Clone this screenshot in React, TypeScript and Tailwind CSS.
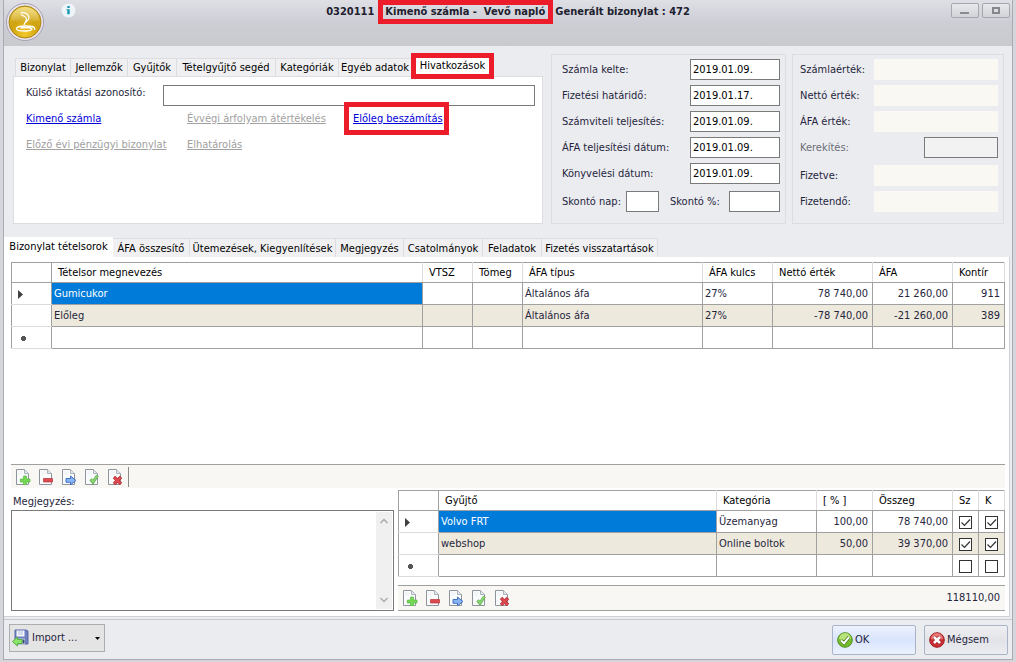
import { useState } from 'react'
import type { ReactNode } from 'react'
import clsx from 'clsx'

const TOP_TABS = [
  { name: 'Bizonylat', width: 'w-[55px]' },
  { name: 'Jellemzők', width: 'w-[57px]' },
  { name: 'Gyűjtők', width: 'w-[49px]' },
  { name: 'Tételgyűjtő segéd', width: 'w-[99px]' },
  { name: 'Kategóriák', width: 'w-[63px]' },
  { name: 'Egyéb adatok', width: 'w-[73px]' },
  { name: 'Hivatkozások', width: 'w-[83px]' },
]

const LINE_TABS = [
  { name: 'Bizonylat tételsorok', width: 'w-[109px]' },
  { name: 'ÁFA összesítő', width: 'w-[77px]' },
  { name: 'Ütemezések, Kiegyenlítések', width: 'w-[146px]' },
  { name: 'Megjegyzés', width: 'w-[68px]' },
  { name: 'Csatolmányok', width: 'w-[79px]' },
  { name: 'Feladatok', width: 'w-[59px]' },
  { name: 'Fizetés visszatartások', width: 'w-[116px]' },
]

const DATES = [
  { id: 'kelte', label: 'Számla kelte:', value: '2019.01.09.' },
  { id: 'hatarido', label: 'Fizetési határidő:', value: '2019.01.17.' },
  { id: 'szamviteli', label: 'Számviteli teljesítés:', value: '2019.01.09.' },
  { id: 'afadatum', label: 'ÁFA teljesítési dátum:', value: '2019.01.09.' },
  { id: 'konyveles', label: 'Könyvelési dátum:', value: '2019.01.09.' },
]

const LINES = [
  { name: 'Gumicukor', type: 'Általános áfa', rate: '27%', net: '78 740,00', vat: '21 260,00', ledger: '911' },
  { name: 'Előleg', type: 'Általános áfa', rate: '27%', net: '-78 740,00', vat: '-21 260,00', ledger: '389' },
]

const COLLECTORS = [
  { name: 'Volvo FRT', category: 'Üzemanyag', percent: '100,00', amount: '78 740,00' },
  { name: 'webshop', category: 'Online boltok', percent: '50,00', amount: '39 370,00' },
]

const INPUT = 'h-[21px] border border-[#7a7a7a] bg-white px-[2px] pb-px text-black outline-none'
const CELL = 'border border-[#a0a0a0] px-[2px] pt-px'
const HEAD = 'border-x border-y border-x-[#dcdcdc] border-y-[#a0a0a0] px-[6px] text-left font-normal text-black'
const ROW_HEAD = 'border-x border-y border-x-[#a0a0a0] border-y-[#dcdcdc] bg-white pl-[6px] pt-px'

function Highlight({ className }: { className: string }) {
  return <span className={clsx('pointer-events-none absolute z-10 border-[5px] border-[#ec1c2b]', className)} />
}

function PageIcon({ children }: { children: ReactNode }) {
  return (
    <svg className="h-4 w-4" viewBox="0 0 16 16" fill="none">
      <path d="M1.500 .5h8l4 4v11h-12z" fill="#fafbfc" stroke="#8d949c" />
      <path d="M9.500 .5v4h4" fill="#e4e8ec" stroke="#aab2ba" />
      <path d="M3 3h5M3 5h4" stroke="#edf0f2" />
      {children}
    </svg>
  )
}

function RecordToolbar() {
  const button = 'flex h-5 w-4 items-center justify-center'
  return (
    <div className="flex gap-[7px]">
      <button className={button} aria-label="Új sor">
        <PageIcon><path d="M8.500 7h3v3h3.500v3h-3.500v3h-3v-3h-3.200v-3h3.200z" fill="#74d953" stroke="#4fae39" strokeWidth=".6" /></PageIcon>
      </button>
      <button className={button} aria-label="Sor törlése">
        <PageIcon><path d="M5.500 9.500h9v3.500h-9z" fill="#dc4b50" stroke="#b8343b" strokeWidth=".7" /></PageIcon>
      </button>
      <button className={button} aria-label="Sor szerkesztése">
        <PageIcon><path d="M5 9.500h4.500v-2.500l5.500 4.500-5.500 4.300v-2.500h-4.500z" fill="#88b4f2" stroke="#3467bd" strokeWidth=".9" /></PageIcon>
      </button>
      <button className={button} aria-label="Sor mentése">
        <PageIcon><path d="M6.500 10.200l2.500 3 4.500-6.700" stroke="#5cab4b" strokeWidth="3" /><path d="M6.700 10.400l2.300 2.500 4.300-6.100" stroke="#8fd877" strokeWidth="1.600" /></PageIcon>
      </button>
      <button className={button} aria-label="Visszavonás">
        <PageIcon><path d="M7 8l7 7M14 8l-7 7" stroke="#b92f38" strokeWidth="3.400" /><path d="M7.500 8.500l6 6M13.500 8.500l-6 6" stroke="#dd4a50" strokeWidth="2" /></PageIcon>
      </button>
    </div>
  )
}

function CurrentMark() {
  return <svg className="h-[9px] w-[5px]" viewBox="0 0 5 9"><path d="M0 0l5 4.500-5 4.500z" fill="#404040" /></svg>
}

function NewMark() {
  return (
    <svg className="ml-[3px] h-[5px] w-[5px]" viewBox="0 0 5 5">
      <path d="M1 0h3v1h1v3h-1v1h-3v-1h-1v-3h1z" fill="#555" />
    </svg>
  )
}

function Check({ label, checked }: { label: string; checked: boolean }) {
  const [on, setOn] = useState(checked)
  return (
    <span className="relative mx-auto block h-[13px] w-[13px]">
      <input type="checkbox" aria-label={label} checked={on} onChange={() => setOn(!on)} className="block h-full w-full appearance-none border border-[#333] bg-white" />
      {on && (
        <svg className="pointer-events-none absolute inset-0" viewBox="0 0 13 13" fill="none">
          <path d="M2.500 6.500l3 3 5.500-6" stroke="#333" strokeWidth="1.200" />
        </svg>
      )}
    </span>
  )
}

function Logo() {
  return (
    <svg className="h-10 w-10" viewBox="0 0 40 40" fill="none">
      <defs>
        <radialGradient id="gold" cx=".5" cy=".85" r=".85">
          <stop offset="0" stopColor="#f4c92e" />
          <stop offset=".5" stopColor="#cfa20f" />
          <stop offset="1" stopColor="#dcb52c" />
        </radialGradient>
        <linearGradient id="gloss" x1="0" y1="0" x2="0" y2="1">
          <stop offset="0" stopColor="#fff0a0" stopOpacity=".7" />
          <stop offset="1" stopColor="#fff" stopOpacity=".02" />
        </linearGradient>
      </defs>
      <circle cx="20" cy="20" r="18.500" fill="#e9e4ee" stroke="#a69eb3" />
      <circle cx="20" cy="20" r="16" fill="url(#gold)" stroke="#a88612" />
      <path d="M6 18a14 13 0 0 1 28 0c-8 4-20 4-28 0z" fill="url(#gloss)" />
      <path d="M15.500 11c4-1.500 8.500 1 8.500 5 0 3-4.500 3.500-5 7M16 12.500l3.500 2c3 1 2 4 .5 6" stroke="#fff" strokeWidth="1.200" />
      <path d="M29.500 28c1.500-4-5-4-9-4-5 0-9 1-9 2.700 0 2.300 6 2.300 9 2.300s8-1 6-2.700c-2-1-8-1-11-.3" stroke="#fff" strokeWidth="1.300" />
    </svg>
  )
}

function TitleBar() {
  const control = 'flex h-[15px] w-7 items-center justify-center rounded-[2px] border border-[#a5a6ae] bg-gradient-to-b from-[#e8e8ec] to-[#d2d3d8]'
  return (
    <header className="relative flex h-[46px] items-start justify-between bg-gradient-to-b from-[#dfe0e6] via-[#cdced5] to-[#c9cacd]">
      <div className="flex w-20 items-start gap-4 pl-px pt-[2px]">
        <Logo />
        <svg className="mt-px h-[15px] w-[15px]" viewBox="0 0 15 15">
          <circle cx="7.500" cy="7.500" r="7" fill="#edf5f9" />
          <path d="M6.300 3h2.400v2h-2.400zM5.500 6.300h3.200v5h-2.400v-4h-.8z" fill="#1896b8" />
        </svg>
      </div>
      <h1 className="flex whitespace-pre pt-[5px] font-bold leading-[14px] text-[#20202e]">
        <span>0320111 - </span>
        <span className="relative">
          Kimenő számla -  Vevő napló
          <Highlight className="-bottom-[5px] -left-[7px] -right-2 -top-[5px]" />
        </span>
        <span className="pl-[10px]">Generált bizonylat : 472</span>
      </h1>
      <div className="flex w-20 justify-end gap-[3px] pr-[2px] pt-[3px]">
        <button className={control} aria-label="Kis méret">
          <svg className="h-2 w-[10px]" viewBox="0 0 10 8"><path d="M0 5h9v2h-9z" fill="#898b92" /></svg>
        </button>
        <button className={control} aria-label="Teljes méret">
          <svg className="h-[7px] w-2" viewBox="0 0 8 7" fill="none"><path d="M1 1h6v5h-6z" stroke="#85878e" strokeWidth="2" /></svg>
        </button>
      </div>
    </header>
  )
}

function ReferencePanel() {
  const [tab, setTab] = useState(6)
  const disabled = 'justify-self-start text-[#a0a0a0] underline'
  return (
    <section className="ml-[9px] flex min-w-0 flex-1 flex-col">
      <div role="tablist" className="ml-[2px] mt-1 flex h-[18px] items-stretch">
        {TOP_TABS.map((t, i) => (
          <button
            key={t.name}
            role="tab"
            aria-selected={tab === i}
            onClick={() => setTab(i)}
            className={clsx(
              'relative shrink-0 whitespace-nowrap text-black',
              t.width,
              tab === i ? 'z-10 -mt-[2px] bg-white' : 'border-l border-t border-[#dcdde1] bg-[#f0f0f2] pt-px',
            )}
          >
            {t.name}
            {i === 6 && <Highlight className="-bottom-[3px] -top-[3px] left-0 right-0" />}
          </button>
        ))}
      </div>
      <div className="flex-1 border border-[#dcdde1] bg-white px-[7px] pt-2">
        <div className="flex h-[21px] items-center pl-[5px]">
          <label htmlFor="iktato" className="w-[137px] pb-[6px]">Külső iktatási azonosító:</label>
          <input id="iktato" className={clsx(INPUT, 'min-w-0 flex-1')} />
        </div>
        <div className="grid grid-cols-[161px_166px_1fr] gap-y-3 pl-[5px] pt-[6px] leading-[14px]">
          <a href="#kimeno" className="justify-self-start text-[#0000d8] underline">Kimenő számla</a>
          <a aria-disabled="true" className={disabled}>Évvégi árfolyam átértékelés</a>
          <a href="#eloleg" className="relative justify-self-start text-[#0000d8] underline">
            Előleg beszámítás
            <Highlight className="-bottom-[9px] -left-[9px] -right-[6px] -top-[10px]" />
          </a>
          <a aria-disabled="true" className={disabled}>Előző évi pénzügyi bizonylat</a>
          <a aria-disabled="true" className={disabled}>Elhatárolás</a>
        </div>
      </div>
    </section>
  )
}

function DatePanel() {
  return (
    <section className="flex w-[235px] flex-col gap-[5px] border border-[#dcdde1] pl-[10px] pr-[5px] pt-1">
      {DATES.map((d) => (
        <div key={d.id} className="flex h-[21px] items-center justify-between">
          <label htmlFor={d.id} className="pt-px">{d.label}</label>
          <input id={d.id} defaultValue={d.value} className={clsx(INPUT, 'w-[90px]')} />
        </div>
      ))}
      <div className="mt-[2px] flex h-[21px] items-center">
        <label htmlFor="skontonap" className="w-16 pt-px">Skontó nap:</label>
        <input id="skontonap" className={clsx(INPUT, 'w-[33px]')} />
        <label htmlFor="skonto" className="ml-[11px] pt-px">Skontó %:</label>
        <input id="skonto" className={clsx(INPUT, 'ml-auto w-[51px]')} />
      </div>
    </section>
  )
}

function AmountPanel() {
  const row = 'flex h-[21px] items-center justify-between'
  const output = 'h-[21px] w-[124px] bg-[#f9f8f3]'
  return (
    <section className="flex w-[212px] flex-col gap-[5px] border border-[#dcdde1] pl-[7px] pr-[5px] pt-1">
      {['Számlaérték:', 'Nettó érték:', 'ÁFA érték:'].map((label) => (
        <div key={label} className={row}>
          <span className="pt-px">{label}</span>
          <output className={output} />
        </div>
      ))}
      <div className={clsx(row, 'mb-[2px]')}>
        <label htmlFor="kerekites" className="pt-px text-[#6b6c78]">Kerekítés:</label>
        <input id="kerekites" disabled className="h-[21px] w-[74px] border border-[#7a7a7a] bg-[#f2f2f2]" />
      </div>
      {['Fizetve:', 'Fizetendő:'].map((label) => (
        <div key={label} className={row}>
          <span className="pt-px">{label}</span>
          <output className={output} />
        </div>
      ))}
    </section>
  )
}

function LineTable() {
  return (
    <table className="w-full table-fixed border-collapse">
      <colgroup>
        <col className="w-10" />
        <col />
        <col className="w-[50px]" />
        <col className="w-[50px]" />
        <col className="w-[180px]" />
        <col className="w-[70px]" />
        <col className="w-[100px]" />
        <col className="w-[80px]" />
        <col className="w-[52px]" />
      </colgroup>
      <thead>
        <tr className="h-5">
          <th className="border border-[#a0a0a0]" />
          {['Tételsor megnevezés', 'VTSZ', 'Tömeg', 'ÁFA típus', 'ÁFA kulcs', 'Nettó érték', 'ÁFA', 'Kontír'].map((h) => (
            <th key={h} className={HEAD}>{h}</th>
          ))}
        </tr>
      </thead>
      <tbody>
        {LINES.map((line, i) => (
          <tr key={line.name} className={clsx('h-[22px]', i === 1 && 'bg-[#eee9dd]')}>
            <td className={ROW_HEAD}>{i === 0 && <CurrentMark />}</td>
            <td className={clsx(CELL, i === 0 && 'bg-[#007bda] text-white')}>{line.name}</td>
            <td className={CELL} />
            <td className={CELL} />
            <td className={CELL}>{line.type}</td>
            <td className={CELL}>{line.rate}</td>
            <td className={clsx(CELL, 'pr-1 text-right')}>{line.net}</td>
            <td className={clsx(CELL, 'pr-1 text-right')}>{line.vat}</td>
            <td className={clsx(CELL, 'pr-1 text-right')}>{line.ledger}</td>
          </tr>
        ))}
        <tr className="h-[22px]">
          <td className={ROW_HEAD}><NewMark /></td>
          {Array.from({ length: 8 }, (_, i) => <td key={i} className={CELL} />)}
        </tr>
      </tbody>
    </table>
  )
}

function CollectorTable() {
  return (
    <table className="w-full table-fixed border-collapse">
      <colgroup>
        <col className="w-10" />
        <col />
        <col className="w-[100px]" />
        <col className="w-[56px]" />
        <col className="w-[80px]" />
        <col className="w-[26px]" />
        <col className="w-[26px]" />
      </colgroup>
      <thead>
        <tr className="h-5">
          <th className="border border-[#a0a0a0]" />
          {['Gyűjtő', 'Kategória', '[ % ]', 'Összeg', 'Sz', 'K'].map((h) => (
            <th key={h} className={HEAD}>{h}</th>
          ))}
        </tr>
      </thead>
      <tbody>
        {COLLECTORS.map((c, i) => (
          <tr key={c.name} className={clsx('h-[22px]', i === 1 && 'bg-[#eee9dd]')}>
            <td className={ROW_HEAD}>{i === 0 && <CurrentMark />}</td>
            <td className={clsx(CELL, i === 0 && 'bg-[#007bda] text-white')}>{c.name}</td>
            <td className={CELL}>{c.category}</td>
            <td className={clsx(CELL, 'pr-1 text-right')}>{c.percent}</td>
            <td className={clsx(CELL, 'pr-1 text-right')}>{c.amount}</td>
            <td className={CELL}><Check label="Sz" checked /></td>
            <td className={CELL}><Check label="K" checked /></td>
          </tr>
        ))}
        <tr className="h-[22px]">
          <td className={ROW_HEAD}><NewMark /></td>
          {Array.from({ length: 4 }, (_, i) => <td key={i} className={CELL} />)}
          <td className={CELL}><Check label="Sz" checked={false} /></td>
          <td className={CELL}><Check label="K" checked={false} /></td>
        </tr>
      </tbody>
    </table>
  )
}

function NoteBox() {
  return (
    <div className="flex w-[383px] flex-col">
      <label htmlFor="megjegyzes" className="flex h-[22px] items-center pl-[2px] pt-[6px]">Megjegyzés:</label>
      <div className="flex flex-1 border border-[#7a7a7a]">
        <textarea id="megjegyzes" className="min-w-0 flex-1 resize-none p-1 outline-none" />
        <div className="mb-px mr-px mt-px flex w-4 flex-col items-center justify-between bg-[#f0f0f0] py-[6px]">
          <svg className="h-[6px] w-2" viewBox="0 0 8 6" fill="none"><path d="M.5 5l3.500-3.500 3.500 3.500" stroke="#aaa" strokeWidth="1.500" /></svg>
          <svg className="h-[6px] w-2" viewBox="0 0 8 6" fill="none"><path d="M.5 1l3.500 3.500 3.500-3.500" stroke="#aaa" strokeWidth="1.500" /></svg>
        </div>
      </div>
    </div>
  )
}

function Footer() {
  const button = 'flex h-[30px] w-[84px] items-center rounded-[2px] border border-[#a9b4c9] pl-1'
  return (
    <footer className="flex h-10 items-start justify-between border-t border-[#c8c9ce] pl-[5px] pr-1 pt-1">
      <button className="flex h-[28px] w-24 items-center border border-[#adadb0] bg-[#e4e4e5] pl-[2px] pr-1">
        <svg className="h-[18px] w-[17px]" viewBox="0 0 17 18">
          <path d="M3 1h11l2 1v13h-13z" fill="#6d7fc0" stroke="#5b67a6" />
          <path d="M4.500 1.500h8v6h-8z" fill="#f4f7fc" />
          <path d="M5 9.500h8v6h-8z" fill="#cdd6e6" />
          <path d="M10.500 10.500h2v4h-2z" fill="#3c4679" />
          <path d="M6 3h5M6 5h5" stroke="#b4bfd8" />
          <path d="M.5 12.500l5-4.500v2.500h4.500v4h-4.500v2.500z" fill="#8be66b" stroke="#55b045" />
        </svg>
        <span className="flex-1 pl-[3px] text-left">Import ...</span>
        <svg className="h-[3px] w-[5px]" viewBox="0 0 5 3"><path d="M0 0h5l-2.500 3z" fill="#000" /></svg>
      </button>
      <div className="flex gap-2 pt-px">
        <button className={clsx(button, 'bg-gradient-to-b from-[#edf2fd] via-[#d8e3fd] to-[#ecf2fe]')}>
          <svg className="h-4 w-4" viewBox="0 0 16 16" fill="none">
            <circle cx="8" cy="8" r="7.300" fill="#78bd2e" stroke="#4c8f1c" />
            <path d="M2 7a6 6 0 0 1 12 0c-4 1.500-8 1.500-12 0z" fill="#b8e37c" />
            <path d="M4 8.500l3 2.700 5-6" stroke="#3f7a1a" strokeWidth="3.400" />
            <path d="M4 8.500l3 2.700 5-6" stroke="#fff" strokeWidth="2" />
          </svg>
          <span className="pl-[2px]">OK</span>
        </button>
        <button className={clsx(button, 'bg-gradient-to-b from-[#f0f0f3] via-[#e2e3e8] to-[#ecedf1]')}>
          <svg className="h-4 w-4" viewBox="0 0 16 16" fill="none">
            <circle cx="8" cy="8" r="7.300" fill="#c92d33" stroke="#9c1c22" />
            <path d="M2 7a6 6 0 0 1 12 0c-4 1.500-8 1.500-12 0z" fill="#e77a78" />
            <path d="M5 5l6 6M11 5l-6 6" stroke="#a31d24" strokeWidth="4" />
            <path d="M5 5l6 6M11 5l-6 6" stroke="#fff" strokeWidth="2.600" />
          </svg>
          <span className="pl-[2px]">Mégsem</span>
        </button>
      </div>
    </footer>
  )
}

export default function App() {
  const [lineTab, setLineTab] = useState(0)

  return (
    <div className="flex min-h-screen flex-col bg-[#d5d6db] px-[3px] pb-[2px] font-['DejaVu_Sans_Condensed','DejaVu_Sans',sans-serif] text-[11px] leading-[14px] text-[#25253c]">
      <div className="flex flex-1 flex-col border-x border-b border-[#a9aab2] bg-[#ebecf0]">
        <TitleBar />

        <div className="mr-2 mt-2 flex h-[170px] items-stretch">
          <ReferencePanel />
          <div className="ml-2 flex gap-[6px]">
            <DatePanel />
            <AmountPanel />
          </div>
        </div>

        <div role="tablist" className="mt-[14px] flex h-[19px] items-stretch">
          {LINE_TABS.map((t, i) => (
            <button
              key={t.name}
              role="tab"
              aria-selected={lineTab === i}
              onClick={() => setLineTab(i)}
              className={clsx(
                'shrink-0 whitespace-nowrap text-black',
                t.width,
                lineTab === i ? '-mt-px bg-white' : 'border-r border-t border-[#dcdde1] bg-[#f0f0f2] pt-px',
              )}
            >
              {t.name}
            </button>
          ))}
        </div>

        <main className="mr-[2px] flex flex-1 flex-col border-b border-r border-[#d0d1d6] bg-white px-1 pb-[5px] pl-[7px] pt-[5px]">
          <LineTable />
          <div className="min-h-[40px] flex-1" />
          <div className="flex h-6 items-center border-t border-[#a0a0a0] bg-[#f8f7f3] pl-1">
            <RecordToolbar />
            <div className="ml-[5px] h-5 w-px bg-[#8b8b8b]" />
          </div>
          <div className="flex gap-1">
            <NoteBox />
            <div className="min-w-0 flex-1 pt-[2px]">
              <CollectorTable />
              <div className="mt-2 flex h-[26px] items-center justify-between border-y border-[#a0a0a0] bg-[#f8f7f3] pl-1 pr-[5px]">
                <RecordToolbar />
                <span>118110,00</span>
              </div>
            </div>
          </div>
        </main>

        <div className="h-[2px]" />
        <Footer />
      </div>
    </div>
  )
}
